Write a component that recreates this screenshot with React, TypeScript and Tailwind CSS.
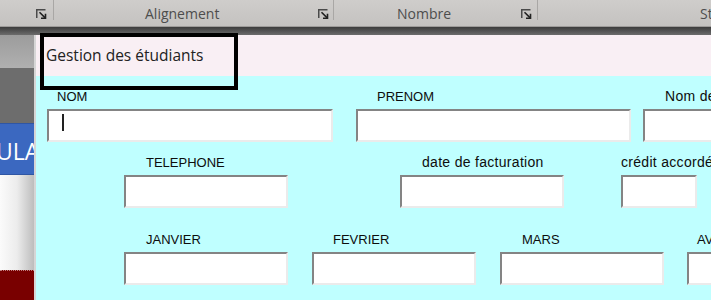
import React from "react";

function Launcher() {
  return (
    <svg width="11" height="10" viewBox="0 0 11 10" className="shrink-0">
      <polyline points="0.75,9 0.75,0.75 9.5,0.75" fill="none" stroke="#4a4a4a" strokeWidth="1.5" />
      <line x1="3.5" y1="3.2" x2="9.2" y2="8.9" stroke="#222" strokeWidth="1.6" />
      <polyline points="5,9.2 9.5,9.2 9.5,4.7" fill="none" stroke="#222" strokeWidth="1.6" />
    </svg>
  );
}

function Sep() {
  return <div className="w-[1px] h-[20px] bg-[#a9a7a5] shrink-0" />;
}

function Field({
  label,
  w,
  lm,
  cursor,
  lower,
}: {
  label: string;
  w: string;
  lm: string;
  cursor?: boolean;
  lower?: boolean;
}) {
  return (
    <div className={`flex flex-col shrink-0 ${w}`}>
      <div
        className={`h-[15px] leading-[15px] whitespace-nowrap ${lm} ${
          lower ? "text-[14px] tracking-[0.3px]" : "text-[13px]"
        }`}
      >
        {label}
      </div>
      <div className="mt-[5px] h-[33px] bg-white border-2 border-t-[#848484] border-l-[#848484] border-r-[#ebebeb] border-b-[#ebebeb]">
        {cursor && <div className="ml-[13px] mt-[3px] w-[1.5px] h-[17px] bg-[#222]" />}
      </div>
    </div>
  );
}

export default function App() {
  return (
    <div className="relative w-[711px] h-[300px] overflow-hidden bg-[#6f6f6f]">
      {/* Ribbon */}
      <div className="flex h-[26px] bg-gradient-to-b from-[#cfcdcb] to-[#c4c2c0] font-['Open_Sans',sans-serif] text-[14px] text-[#4d4d4d]">
        <div className="w-[53px] flex items-start justify-end pr-[6px] pt-[9px] shrink-0">
          <Launcher />
        </div>
        <Sep />
        <div className="w-[279px] flex items-start shrink-0">
          <span className="ml-[91px] mt-[4px] leading-[20px]">Alignement</span>
          <div className="ml-auto mr-[4px] mt-[9px]">
            <Launcher />
          </div>
        </div>
        <Sep />
        <div className="w-[203px] flex items-start shrink-0">
          <span className="ml-[63px] mt-[4px] leading-[20px]">Nombre</span>
          <div className="ml-auto mr-[5px] mt-[9px]">
            <Launcher />
          </div>
        </div>
        <Sep />
        <div className="flex items-start">
          <span className="ml-[162px] mt-[4px] leading-[20px]">Styles</span>
        </div>
      </div>
      <div className="h-[1px] bg-[#9d9b99]" />
      <div className="h-[8px] bg-gradient-to-b from-[#3c3c3c] to-[#6c6c6c]" />

      {/* Body */}
      <div className="flex h-[265px]">
        {/* left Excel strip */}
        <div className="w-[34px] shrink-0 flex flex-col">
          <div className="h-[33px] bg-gradient-to-b from-[#9c9c9c] to-[#b0b0b0]" />
          <div className="h-[55px] bg-[#6d6d6d]" />
          <div className="h-[52px] bg-[#3b68c0] border-y border-[#2f56a4] overflow-hidden flex items-center pt-[4px]">
            <span className="ml-[-4px] text-white text-[23px] leading-none font-['Open_Sans',sans-serif] whitespace-nowrap">
              ULA
            </span>
          </div>
          <div className="h-[95px] bg-gradient-to-r from-[#fbfbfb] via-[#ececec] to-[#bdbdbd]" />
          <div className="flex-1 bg-[#790000] border-t border-dotted border-[#c08080]" />
        </div>

        {/* Form */}
        <div className="flex-1 flex flex-col border-l-2 border-[#d6d6d6] font-['Liberation_Sans',Arial,sans-serif] text-[13px] text-[#0d0d0d]">
          <div className="h-[41px] bg-[#f9eff4] flex items-center pl-[10px] font-['Open_Sans',sans-serif] text-[15.5px] text-[#222]">
            Gestion des étudiants
          </div>
          <div className="flex-1 bg-[#bfffff] pt-[13px]">
            <div className="flex pl-[11px]">
              <Field label="NOM" w="w-[286px]" lm="ml-[10px]" cursor />
              <div className="w-[23px] shrink-0" />
              <Field label="PRENOM" w="w-[275px]" lm="ml-[21px]" />
              <div className="w-[12px] shrink-0" />
              <Field label="Nom de famille" w="w-[200px]" lm="ml-[22px]" lower />
            </div>
            <div className="flex pl-[88px] mt-[13px]">
              <Field label="TELEPHONE" w="w-[164px]" lm="ml-[22px]" />
              <div className="w-[112px] shrink-0" />
              <Field label="date de facturation" w="w-[164px]" lm="ml-[22px]" lower />
              <div className="w-[57px] shrink-0" />
              <Field label="crédit accordé" w="w-[76px]" lm="ml-0" lower />
            </div>
            <div className="flex pl-[88px] mt-[24px]">
              <Field label="JANVIER" w="w-[164px]" lm="ml-[22px]" />
              <div className="w-[24px] shrink-0" />
              <Field label="FEVRIER" w="w-[164px]" lm="ml-[21px]" />
              <div className="w-[24px] shrink-0" />
              <Field label="MARS" w="w-[164px]" lm="ml-[22px]" />
              <div className="w-[23px] shrink-0" />
              <Field label="AVRIL" w="w-[164px]" lm="ml-[10px]" />
            </div>
          </div>
        </div>
      </div>

      {/* Selection box over title */}
      <div className="absolute left-[40px] top-[33px] w-[198px] h-[57px] border-4 border-black" />
    </div>
  );
}
